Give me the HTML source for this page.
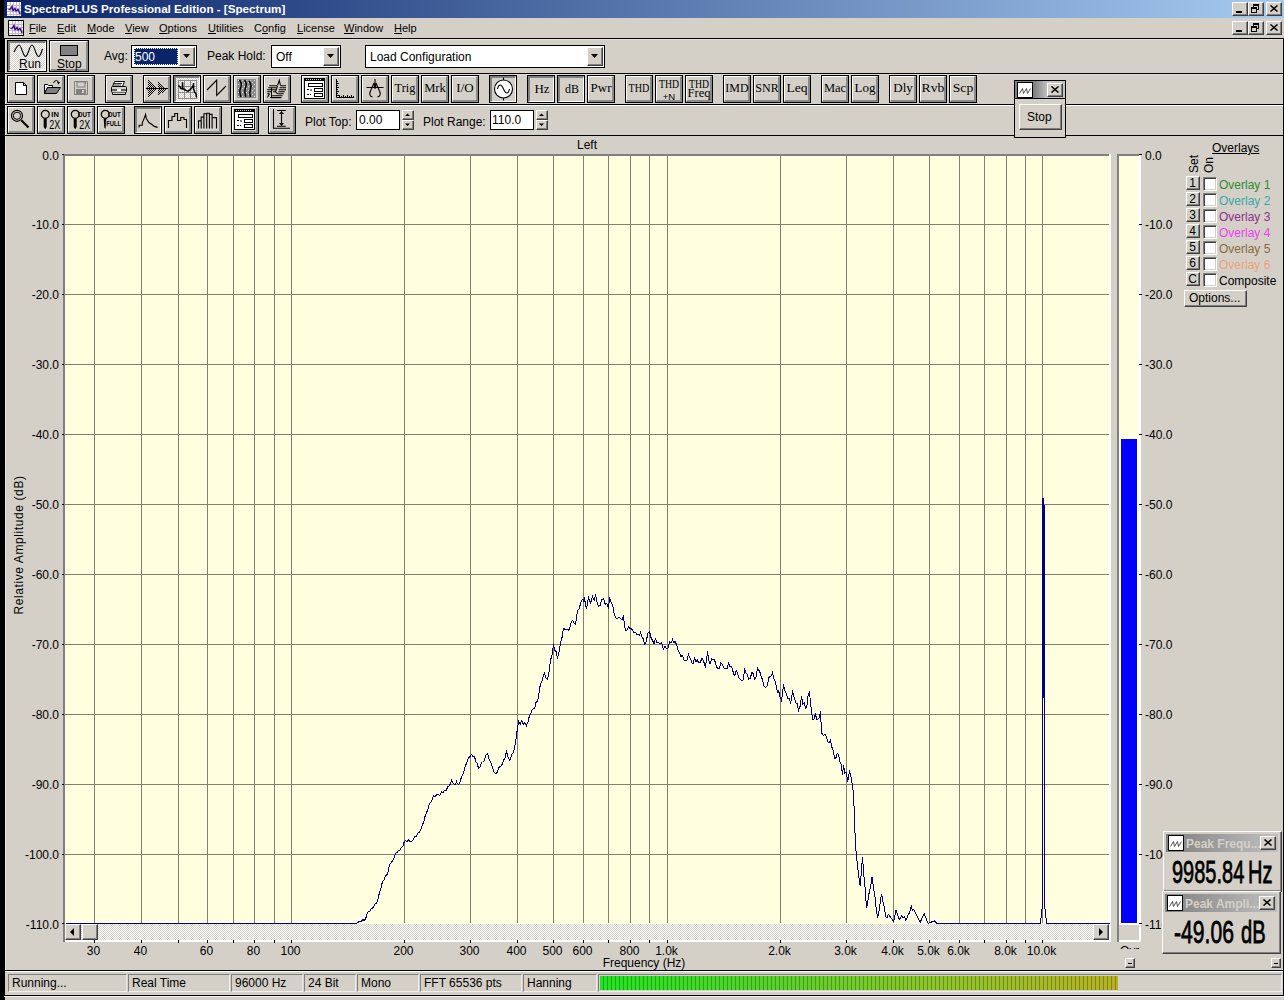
<!DOCTYPE html><html><head><meta charset="utf-8"><style>*{margin:0;padding:0;box-sizing:border-box}
html,body{width:1284px;height:1000px;overflow:hidden;background:#D4D0C8;font-family:"Liberation Sans",sans-serif;font-size:12px;color:#000;position:relative}
.a{position:absolute}
.t{position:absolute;white-space:nowrap;line-height:1}
.b{position:absolute;border:1px solid #000;background:#D4D0C8}
.b::before{content:'';position:absolute;left:0;top:0;right:0;bottom:0;border-top:1px solid #fff;border-left:1px solid #fff;border-right:2px solid #8A8A8A;border-bottom:2px solid #8A8A8A}
.p{background-color:#E8E6E2;background-image:repeating-conic-gradient(#D4D0C8 0 25%,#fff 0 50%);background-size:2px 2px}
.p::before{border-top:2px solid #808080;border-left:2px solid #808080;border-right:1px solid #fff;border-bottom:1px solid #fff}
.sv{position:absolute;left:0;top:0;overflow:visible}
.ser{font-family:"Liberation Serif",serif}
.u{text-decoration:underline}
.btn2{position:absolute;background:#D4D0C8;border-top:1px solid #fff;border-left:1px solid #fff;border-right:1px solid #404040;border-bottom:1px solid #404040;box-shadow:inset -1px -1px 0 #808080}
.sunk{position:absolute;background:#fff;border-top:1px solid #808080;border-left:1px solid #808080;border-right:1px solid #fff;border-bottom:1px solid #fff;box-shadow:inset 1px 1px 0 #404040,inset -1px -1px 0 #D4D0C8}
</style></head><body><div class="a" style="left:0px;top:0px;width:5px;height:1000px;background:#000;"></div><div class="a" style="left:4px;top:0px;width:1280px;height:18px;background:linear-gradient(to right,#0A246A,#A6CAF0);"></div><svg class="a" style="left:7px;top:2px" width="14" height="14" viewBox="0 0 14 14"><rect x="0" y="0" width="14" height="14" fill="#fff"/><rect x="3" y="0" width="1" height="14" fill="#C8B8C8"/><rect x="0" y="3" width="14" height="1" fill="#C8B8C8"/><rect x="6" y="0" width="1" height="14" fill="#C8B8C8"/><rect x="0" y="6" width="14" height="1" fill="#C8B8C8"/><rect x="9" y="0" width="1" height="14" fill="#C8B8C8"/><rect x="0" y="9" width="14" height="1" fill="#C8B8C8"/><rect x="12" y="0" width="1" height="14" fill="#C8B8C8"/><rect x="0" y="12" width="14" height="1" fill="#C8B8C8"/><g transform="translate(0 0)"><path d="M1.5 7.5 L3.5 7 L5 4.5 L6 8.5 L8 6.5 L9 9 L11 7.5 L12.5 10.5 L13 12" stroke="#C0A0F0" stroke-width="2.4" fill="none"/><path d="M1.5 7.5 L3.5 7 L5 4.5 L6 8.5 L8 6.5 L9 9 L11 7.5 L12.5 10.5 L13 12" stroke="#2A0A70" stroke-width="1.2" fill="none"/></g></svg><div class="t" style="left:24px;top:3px;font-size:11.65px;font-weight:bold;color:#fff">SpectraPLUS Professional Edition - [Spectrum]</div><div class="a" style="left:4px;top:18px;width:1280px;height:20px;background:#D4D0C8;"></div><div class="btn2" style="left:1232px;top:2px;width:16px;height:14px"></div><div class="a" style="left:1236px;top:11px;width:6px;height:2px;background:#000;"></div><div class="btn2" style="left:1248px;top:2px;width:16px;height:14px"></div><div class="a" style="left:1253px;top:4px;width:6px;height:6px;border:1px solid #000;border-top-width:2px"></div><div class="a" style="left:1251px;top:7px;width:6px;height:6px;border:1px solid #000;border-top-width:2px;background:#D4D0C8"></div><div class="btn2" style="left:1266px;top:2px;width:16px;height:14px"></div><svg class="a" style="left:1270px;top:5px" width="8" height="7"><path d="M0.5 0.5 L7.5 6.5 M7.5 0.5 L0.5 6.5" stroke="#000" stroke-width="1.5"/></svg><div class="btn2" style="left:1232px;top:21px;width:16px;height:14px"></div><div class="a" style="left:1236px;top:30px;width:6px;height:2px;background:#000;"></div><div class="btn2" style="left:1248px;top:21px;width:16px;height:14px"></div><div class="a" style="left:1253px;top:23px;width:6px;height:6px;border:1px solid #000;border-top-width:2px"></div><div class="a" style="left:1251px;top:26px;width:6px;height:6px;border:1px solid #000;border-top-width:2px;background:#D4D0C8"></div><div class="btn2" style="left:1266px;top:21px;width:16px;height:14px"></div><svg class="a" style="left:1270px;top:24px" width="8" height="7"><path d="M0.5 0.5 L7.5 6.5 M7.5 0.5 L0.5 6.5" stroke="#000" stroke-width="1.5"/></svg><svg class="a" style="left:8px;top:20px" width="16" height="16" viewBox="0 0 16 16"><rect x="1" y="1" width="14" height="14" fill="#fff"/><rect x="4" y="1" width="1" height="14" fill="#C8B8C8"/><rect x="1" y="4" width="14" height="1" fill="#C8B8C8"/><rect x="7" y="1" width="1" height="14" fill="#C8B8C8"/><rect x="1" y="7" width="14" height="1" fill="#C8B8C8"/><rect x="10" y="1" width="1" height="14" fill="#C8B8C8"/><rect x="1" y="10" width="14" height="1" fill="#C8B8C8"/><rect x="13" y="1" width="1" height="14" fill="#C8B8C8"/><rect x="1" y="13" width="14" height="1" fill="#C8B8C8"/><g transform="translate(1 1)"><path d="M1.5 7.5 L3.5 7 L5 4.5 L6 8.5 L8 6.5 L9 9 L11 7.5 L12.5 10.5 L13 12" stroke="#C0A0F0" stroke-width="2.4" fill="none"/><path d="M1.5 7.5 L3.5 7 L5 4.5 L6 8.5 L8 6.5 L9 9 L11 7.5 L12.5 10.5 L13 12" stroke="#2A0A70" stroke-width="1.2" fill="none"/></g><rect x="0.5" y="0.5" width="15" height="15" fill="none" stroke="#000"/></svg><div class="t" style="left:29px;top:23px;font-size:11px;"><u>F</u>ile</div><div class="t" style="left:57px;top:23px;font-size:11px;"><u>E</u>dit</div><div class="t" style="left:87px;top:23px;font-size:11px;"><u>M</u>ode</div><div class="t" style="left:125px;top:23px;font-size:11px;"><u>V</u>iew</div><div class="t" style="left:159px;top:23px;font-size:11px;"><u>O</u>ptions</div><div class="t" style="left:208px;top:23px;font-size:11px;"><u>U</u>tilities</div><div class="t" style="left:254px;top:23px;font-size:11px;">C<u>o</u>nfig</div><div class="t" style="left:297px;top:23px;font-size:11px;"><u>L</u>icense</div><div class="t" style="left:344px;top:23px;font-size:11px;"><u>W</u>indow</div><div class="t" style="left:394px;top:23px;font-size:11px;"><u>H</u>elp</div><div class="a" style="left:4px;top:38px;width:1280px;height:1px;background:#000;"></div><div class="a" style="left:1283px;top:38px;width:1px;height:958px;background:#000;"></div><div class="a" style="left:5px;top:39px;width:1278px;height:1px;background:#E2DFDA;"></div><div class="a" style="left:5px;top:39px;width:1px;height:931px;background:#E6E3DE;"></div><div class="b p" style="left:7px;top:40px;width:40px;height:32px;"></div><svg class="a" style="left:7px;top:40px" width="40" height="32" viewBox="0 0 40 32"><path d="M7 12 C9 8 10.5 5 12 5 C14.5 5 16 16.5 18.5 16.5 C21 16.5 22.5 5 25 5 C27.5 5 29 16.5 31.5 16.5 C33 16.5 34 14 35.5 9" fill="none" stroke="#000" stroke-width="1.1"/></svg><div class="t" style="left:19px;top:58px;font-size:12px;"><u>R</u>un</div><div class="b" style="left:49px;top:40px;width:40px;height:32px;"></div><div class="a" style="left:60px;top:45px;width:18px;height:11px;background:#808080;border:1px solid #000"></div><div class="t" style="left:57px;top:58px;font-size:12px;"><u>S</u>top</div><div class="t" style="left:104px;top:50px;font-size:12px;">Avg:</div><div class="a" style="left:131px;top:45px;width:66px;height:23px;background:#fff;border:1px solid #000"></div><div class="a" style="left:134px;top:48px;width:44px;height:17px;background:#0A246A;outline:1px dotted #fff;outline-offset:-1px"></div><div class="t" style="left:135px;top:51px;font-size:12px;color:#fff">500</div><div class="btn2" style="left:179px;top:47px;width:16px;height:19px"></div><svg class="a" style="left:183px;top:54px" width="8" height="5" viewBox="0 0 8 5"><path d="M0 0 L7 0 L3.5 4 Z" fill="#000"/></svg><div class="t" style="left:207px;top:50px;font-size:12px;">Peak Hold:</div><div class="a" style="left:271px;top:45px;width:70px;height:23px;background:#fff;border:1px solid #000"></div><div class="t" style="left:276px;top:51px;font-size:12px;">Off</div><div class="btn2" style="left:323px;top:47px;width:16px;height:19px"></div><svg class="a" style="left:327px;top:54px" width="8" height="5" viewBox="0 0 8 5"><path d="M0 0 L7 0 L3.5 4 Z" fill="#000"/></svg><div class="a" style="left:365px;top:45px;width:240px;height:23px;background:#fff;border:1px solid #000"></div><div class="t" style="left:370px;top:51px;font-size:12px;">Load Configuration</div><div class="btn2" style="left:587px;top:47px;width:16px;height:19px"></div><svg class="a" style="left:591px;top:54px" width="8" height="5" viewBox="0 0 8 5"><path d="M0 0 L7 0 L3.5 4 Z" fill="#000"/></svg><div class="a" style="left:5px;top:73px;width:1278px;height:1px;background:#000;"></div><div class="a" style="left:5px;top:74px;width:1278px;height:1px;background:#E2DFDA;"></div><div class="a" style="left:5px;top:104px;width:1278px;height:1px;background:#000;"></div><div class="a" style="left:5px;top:105px;width:1278px;height:1px;background:#fff;"></div><div class="a" style="left:5px;top:135px;width:1278px;height:1px;background:#000;"></div><div class="b" style="left:7px;top:75px;width:28px;height:28px;"></div><div class="b" style="left:37px;top:75px;width:28px;height:28px;"></div><div class="b" style="left:67px;top:75px;width:28px;height:28px;"></div><div class="b" style="left:105px;top:75px;width:28px;height:28px;"></div><div class="b" style="left:143px;top:75px;width:28px;height:28px;"></div><div class="b p" style="left:173px;top:75px;width:28px;height:28px;"></div><div class="b" style="left:203px;top:75px;width:28px;height:28px;"></div><div class="b" style="left:233px;top:75px;width:28px;height:28px;"></div><div class="b" style="left:263px;top:75px;width:28px;height:28px;"></div><div class="b" style="left:301px;top:75px;width:28px;height:28px;"></div><div class="b" style="left:331px;top:75px;width:28px;height:28px;"></div><div class="b" style="left:361px;top:75px;width:28px;height:28px;"></div><div class="b" style="left:391px;top:75px;width:28px;height:28px;"></div><div class="b" style="left:421px;top:75px;width:28px;height:28px;"></div><div class="b" style="left:451px;top:75px;width:28px;height:28px;"></div><div class="b" style="left:489px;top:75px;width:28px;height:28px;"></div><div class="a" style="left:490px;top:76px;width:26px;height:26px;border-top:2px solid #808080;border-left:2px solid #808080;border-right:1px solid #fff;border-bottom:1px solid #fff;background:#D4D0C8"></div><div class="b" style="left:527px;top:75px;width:28px;height:28px;"></div><div class="a" style="left:528px;top:76px;width:26px;height:26px;border-top:2px solid #808080;border-left:2px solid #808080;border-right:1px solid #fff;border-bottom:1px solid #fff;background:#D4D0C8"></div><div class="b" style="left:557px;top:75px;width:28px;height:28px;"></div><div class="a" style="left:558px;top:76px;width:26px;height:26px;border-top:2px solid #808080;border-left:2px solid #808080;border-right:1px solid #fff;border-bottom:1px solid #fff;background:#D4D0C8"></div><div class="b" style="left:587px;top:75px;width:28px;height:28px;"></div><div class="b" style="left:625px;top:75px;width:28px;height:28px;"></div><div class="b" style="left:655px;top:75px;width:28px;height:28px;"></div><div class="b" style="left:685px;top:75px;width:28px;height:28px;"></div><div class="b" style="left:723px;top:75px;width:28px;height:28px;"></div><div class="b" style="left:753px;top:75px;width:28px;height:28px;"></div><div class="b" style="left:783px;top:75px;width:28px;height:28px;"></div><div class="b" style="left:821px;top:75px;width:28px;height:28px;"></div><div class="b" style="left:851px;top:75px;width:28px;height:28px;"></div><div class="b" style="left:889px;top:75px;width:28px;height:28px;"></div><div class="b" style="left:919px;top:75px;width:28px;height:28px;"></div><div class="b" style="left:949px;top:75px;width:28px;height:28px;"></div><svg class="a" style="left:7px;top:75px" width="28" height="28" viewBox="0 0 28 28"><path d="M8.5 7.5 H16.5 L19.5 10.5 V19.5 H8.5 Z" fill="#fff" stroke="#000"/><path d="M16.5 7.5 V10.5 H19.5" fill="none" stroke="#000"/></svg><svg class="a" style="left:37px;top:75px" width="28" height="28" viewBox="0 0 28 28"><path d="M7.5 9.5 H10.5 L11.5 10.5 H15.5 V12.5 H10.5 L7.5 18.5 Z" fill="#fff" stroke="#000"/><path d="M7.5 18.5 L10.5 12.5 H23.5 L19.5 18.5 Z" fill="#808080" stroke="#000"/><path d="M16.5 8 Q17.5 5.5 19.5 5.5 Q21 5.5 21.5 7.5" fill="none" stroke="#000"/><path d="M20 7 H23 L21.5 9.5 Z" fill="#000"/></svg><svg class="a" style="left:67px;top:75px" width="28" height="28" viewBox="0 0 28 28"><path d="M7.5 6.5 H20.5 V19.5 H7.5 Z" fill="none" stroke="#808080"/><rect x="10" y="7" width="8" height="5" fill="none" stroke="#808080"/><rect x="9" y="14" width="10" height="5" fill="#808080"/><rect x="15" y="15" width="2" height="3" fill="#D4D0C8"/><path d="M18.5 7 V9" stroke="#808080"/></svg><svg class="a" style="left:105px;top:75px" width="28" height="28" viewBox="0 0 28 28"><path d="M9.5 6.5 H19.5 L17.5 11.5 H7.5 Z" fill="#fff" stroke="#000"/><path d="M9 8.5 H17 M8.5 10 H16" stroke="#000" stroke-width="0.8"/><path d="M6.5 12.5 Q6.5 11.5 7.5 11.5 H20.5 Q21.5 11.5 21.5 12.5 V16.5 Q21.5 17.5 20.5 17.5 H7.5 Q6.5 17.5 6.5 16.5 Z" fill="#D4D0C8" stroke="#000"/><rect x="7" y="14" width="14" height="2" fill="#606060"/><rect x="12" y="14" width="4" height="2" fill="#fff"/><path d="M7.5 17.5 V19.5 H20.5 V17.5" fill="#D4D0C8" stroke="#000"/></svg><svg class="a" style="left:143px;top:75px" width="28" height="28" viewBox="0 0 28 28"><rect x="5" y="5" width="1" height="1" fill="#000"/><rect x="6" y="6" width="1" height="1" fill="#000"/><rect x="5" y="7" width="1" height="1" fill="#000"/><rect x="7" y="7" width="1" height="1" fill="#000"/><rect x="15" y="7" width="1" height="1" fill="#000"/><rect x="6" y="8" width="1" height="1" fill="#000"/><rect x="8" y="8" width="1" height="1" fill="#000"/><rect x="16" y="8" width="1" height="1" fill="#000"/><rect x="5" y="9" width="1" height="1" fill="#000"/><rect x="7" y="9" width="1" height="1" fill="#000"/><rect x="9" y="9" width="1" height="1" fill="#000"/><rect x="15" y="9" width="1" height="1" fill="#000"/><rect x="17" y="9" width="1" height="1" fill="#000"/><rect x="6" y="10" width="1" height="1" fill="#000"/><rect x="8" y="10" width="1" height="1" fill="#000"/><rect x="10" y="10" width="1" height="1" fill="#000"/><rect x="16" y="10" width="1" height="1" fill="#000"/><rect x="18" y="10" width="1" height="1" fill="#000"/><rect x="5" y="11" width="1" height="1" fill="#000"/><rect x="7" y="11" width="1" height="1" fill="#000"/><rect x="9" y="11" width="1" height="1" fill="#000"/><rect x="11" y="11" width="1" height="1" fill="#000"/><rect x="15" y="11" width="1" height="1" fill="#000"/><rect x="17" y="11" width="1" height="1" fill="#000"/><rect x="19" y="11" width="1" height="1" fill="#000"/><rect x="6" y="12" width="1" height="1" fill="#000"/><rect x="8" y="12" width="1" height="1" fill="#000"/><rect x="10" y="12" width="1" height="1" fill="#000"/><rect x="12" y="12" width="1" height="1" fill="#000"/><rect x="16" y="12" width="1" height="1" fill="#000"/><rect x="18" y="12" width="1" height="1" fill="#000"/><rect x="20" y="12" width="1" height="1" fill="#000"/><rect x="5" y="13" width="1" height="1" fill="#000"/><rect x="7" y="13" width="1" height="1" fill="#000"/><rect x="9" y="13" width="1" height="1" fill="#000"/><rect x="11" y="13" width="1" height="1" fill="#000"/><rect x="13" y="13" width="1" height="1" fill="#000"/><rect x="15" y="13" width="1" height="1" fill="#000"/><rect x="17" y="13" width="1" height="1" fill="#000"/><rect x="19" y="13" width="1" height="1" fill="#000"/><rect x="21" y="13" width="1" height="1" fill="#000"/><rect x="6" y="14" width="1" height="1" fill="#000"/><rect x="8" y="14" width="1" height="1" fill="#000"/><rect x="10" y="14" width="1" height="1" fill="#000"/><rect x="12" y="14" width="1" height="1" fill="#000"/><rect x="16" y="14" width="1" height="1" fill="#000"/><rect x="18" y="14" width="1" height="1" fill="#000"/><rect x="20" y="14" width="1" height="1" fill="#000"/><rect x="22" y="14" width="1" height="1" fill="#000"/><rect x="5" y="15" width="1" height="1" fill="#000"/><rect x="7" y="15" width="1" height="1" fill="#000"/><rect x="9" y="15" width="1" height="1" fill="#000"/><rect x="11" y="15" width="1" height="1" fill="#000"/><rect x="15" y="15" width="1" height="1" fill="#000"/><rect x="17" y="15" width="1" height="1" fill="#000"/><rect x="19" y="15" width="1" height="1" fill="#000"/><rect x="21" y="15" width="1" height="1" fill="#000"/><rect x="6" y="16" width="1" height="1" fill="#000"/><rect x="8" y="16" width="1" height="1" fill="#000"/><rect x="10" y="16" width="1" height="1" fill="#000"/><rect x="16" y="16" width="1" height="1" fill="#000"/><rect x="18" y="16" width="1" height="1" fill="#000"/><rect x="20" y="16" width="1" height="1" fill="#000"/><rect x="5" y="17" width="1" height="1" fill="#000"/><rect x="7" y="17" width="1" height="1" fill="#000"/><rect x="9" y="17" width="1" height="1" fill="#000"/><rect x="15" y="17" width="1" height="1" fill="#000"/><rect x="17" y="17" width="1" height="1" fill="#000"/><rect x="19" y="17" width="1" height="1" fill="#000"/><rect x="6" y="18" width="1" height="1" fill="#000"/><rect x="8" y="18" width="1" height="1" fill="#000"/><rect x="16" y="18" width="1" height="1" fill="#000"/><rect x="5" y="19" width="1" height="1" fill="#000"/><rect x="7" y="19" width="1" height="1" fill="#000"/><rect x="15" y="19" width="1" height="1" fill="#000"/><rect x="6" y="20" width="1" height="1" fill="#000"/><rect x="5" y="21" width="1" height="1" fill="#000"/><path d="M3 13.5 H25" stroke="#000"/><path d="M3 13.5 L5 12 V15 Z" fill="#000"/></svg><svg class="a" style="left:173px;top:75px" width="28" height="28" viewBox="0 0 28 28"><rect x="5.5" y="5.5" width="18" height="18" fill="none" stroke="#8C8C8C"/><path d="M11.5 5.5 V23.5 M17.5 5.5 V23.5 M5.5 11.5 H23.5 M5.5 17.5 H23.5" stroke="#8C8C8C"/><path d="M5.3 10.6 L7 11.8 L8 13.5 L9.5 13.8 L9.5 7.3 L9.8 13.8 L11 14.3 L13 15.4 L15 16.2 L17 15 L19 12.5 L20.5 10 L20.5 8 L20.6 14 L21.5 17 L23 19 L23.5 22.5" fill="none" stroke="#000" stroke-width="1.5"/></svg><svg class="a" style="left:203px;top:75px" width="28" height="28" viewBox="0 0 28 28"><path d="M4 15 L13.7 5.2 V20.4 L23 11" fill="none" stroke="#000" stroke-width="1.1"/></svg><svg class="a" style="left:233px;top:75px" width="28" height="28" viewBox="0 0 28 28"><rect x="4" y="4" width="19" height="19" fill="#8A8A8A"/><rect x="5" y="5" width="1" height="1" fill="#E0E0E0"/><rect x="9" y="5" width="1" height="1" fill="#E0E0E0"/><rect x="13" y="5" width="1" height="1" fill="#E0E0E0"/><rect x="17" y="5" width="1" height="1" fill="#E0E0E0"/><rect x="21" y="5" width="1" height="1" fill="#E0E0E0"/><rect x="7" y="7" width="1" height="1" fill="#E0E0E0"/><rect x="11" y="7" width="1" height="1" fill="#E0E0E0"/><rect x="15" y="7" width="1" height="1" fill="#E0E0E0"/><rect x="19" y="7" width="1" height="1" fill="#E0E0E0"/><rect x="5" y="9" width="1" height="1" fill="#E0E0E0"/><rect x="9" y="9" width="1" height="1" fill="#E0E0E0"/><rect x="13" y="9" width="1" height="1" fill="#E0E0E0"/><rect x="17" y="9" width="1" height="1" fill="#E0E0E0"/><rect x="21" y="9" width="1" height="1" fill="#E0E0E0"/><rect x="7" y="11" width="1" height="1" fill="#E0E0E0"/><rect x="11" y="11" width="1" height="1" fill="#E0E0E0"/><rect x="15" y="11" width="1" height="1" fill="#E0E0E0"/><rect x="19" y="11" width="1" height="1" fill="#E0E0E0"/><rect x="5" y="13" width="1" height="1" fill="#E0E0E0"/><rect x="9" y="13" width="1" height="1" fill="#E0E0E0"/><rect x="13" y="13" width="1" height="1" fill="#E0E0E0"/><rect x="17" y="13" width="1" height="1" fill="#E0E0E0"/><rect x="21" y="13" width="1" height="1" fill="#E0E0E0"/><rect x="7" y="15" width="1" height="1" fill="#E0E0E0"/><rect x="11" y="15" width="1" height="1" fill="#E0E0E0"/><rect x="15" y="15" width="1" height="1" fill="#E0E0E0"/><rect x="19" y="15" width="1" height="1" fill="#E0E0E0"/><rect x="5" y="17" width="1" height="1" fill="#E0E0E0"/><rect x="9" y="17" width="1" height="1" fill="#E0E0E0"/><rect x="13" y="17" width="1" height="1" fill="#E0E0E0"/><rect x="17" y="17" width="1" height="1" fill="#E0E0E0"/><rect x="21" y="17" width="1" height="1" fill="#E0E0E0"/><rect x="7" y="19" width="1" height="1" fill="#E0E0E0"/><rect x="11" y="19" width="1" height="1" fill="#E0E0E0"/><rect x="15" y="19" width="1" height="1" fill="#E0E0E0"/><rect x="19" y="19" width="1" height="1" fill="#E0E0E0"/><rect x="5" y="21" width="1" height="1" fill="#E0E0E0"/><rect x="9" y="21" width="1" height="1" fill="#E0E0E0"/><rect x="13" y="21" width="1" height="1" fill="#E0E0E0"/><rect x="17" y="21" width="1" height="1" fill="#E0E0E0"/><rect x="21" y="21" width="1" height="1" fill="#E0E0E0"/><path d="M6.5 5 Q9.5 9 7.5 13 Q6 17 8 22 M11.5 5 Q14.5 9 12.5 13 Q11 17 13 22 M16 6 Q19 10 17.5 14 Q16 18 17.5 22" fill="none" stroke="#000" stroke-width="1.5"/></svg><svg class="a" style="left:263px;top:75px" width="28" height="28" viewBox="0 0 28 28"><path d="M6.2 10.8 H14 M17.5 10.8 H23 M5.3 12.8 H13.3 M16.5 12.8 H23 M4.2 14.8 H13.6 M15.7 14.8 H23 M4.2 16.8 H8.4 M10 16.8 H12.5 M15.4 16.8 H21.8 M4.2 18.8 H6.7 M14.6 18.8 H20.7 M9.2 20.8 H19.6 M7.3 22.6 H18.5 M14.6 10.5 L16.3 5.3 L17.5 10.5 M14.5 10.8 L13.3 14.8 L12.5 16.8 L14.6 18.8 M8.5 13 V22.5 M6.5 18.5 L4.5 22.5" fill="none" stroke="#000" stroke-width="1.05"/></svg><svg class="a" style="left:301px;top:75px" width="28" height="28" viewBox="0 0 28 28"><rect x="3.5" y="3.5" width="20" height="20" fill="#fff" stroke="#000"/><rect x="3" y="3" width="21" height="3" fill="#000"/><path d="M5 4.5 H21" stroke="#fff" stroke-dasharray="1 1" stroke-width="0.8"/><rect x="7.5" y="8.5" width="14" height="3" fill="none" stroke="#000"/><rect x="13.5" y="13.5" width="8" height="3" fill="none" stroke="#000"/><rect x="13.5" y="18.5" width="8" height="3" fill="none" stroke="#000"/><path d="M6 14.5 H8 M9 15 H11 M6 19.5 H8 M9 19.5 H10" stroke="#000"/></svg><svg class="a" style="left:331px;top:75px" width="28" height="28" viewBox="0 0 28 28"><path d="M5.5 4 V22.5 H23" fill="none" stroke="#000"/><path d="M5.5 6.5 H7" stroke="#000"/><path d="M5.5 8.5 H8" stroke="#000"/><path d="M5.5 10.5 H7" stroke="#000"/><path d="M5.5 12.5 H8" stroke="#000"/><path d="M5.5 14.5 H7" stroke="#000"/><path d="M5.5 16.5 H8" stroke="#000"/><path d="M5.5 18.5 H7" stroke="#000"/><path d="M5.5 20.5 H8" stroke="#000"/><path d="M8.5 22.5 V20" stroke="#000"/><path d="M10.5 22.5 V21" stroke="#000"/><path d="M12.5 22.5 V20" stroke="#000"/><path d="M14.5 22.5 V21" stroke="#000"/><path d="M16.5 22.5 V20" stroke="#000"/><path d="M18.5 22.5 V21" stroke="#000"/><path d="M20.5 22.5 V20" stroke="#000"/><path d="M22.5 22.5 V21" stroke="#000"/></svg><svg class="a" style="left:361px;top:75px" width="28" height="28" viewBox="0 0 28 28"><path d="M14 4 V14 M13 8 L9.5 16 Q8 19 9.5 21 L11.5 22 M15 8 L18.5 16 Q20 19 18.5 21 L16.5 22 M5.5 12.5 H22.5" fill="none" stroke="#000" stroke-width="1.1"/><rect x="12.8" y="9" width="2.4" height="4" fill="#000"/></svg><div class="t ser" style="left:391px;top:81px;width:28px;text-align:center;font-size:13px;transform:scaleX(0.95)">Trig</div><div class="t ser" style="left:421px;top:81px;width:28px;text-align:center;font-size:13px;transform:scaleX(0.97)">Mrk</div><div class="t ser" style="left:451px;top:81px;width:28px;text-align:center;font-size:13px;transform:scaleX(1)">I/O</div><div class="t ser" style="left:528px;top:82px;width:28px;text-align:center;font-size:13px;transform:scaleX(1)">Hz</div><div class="t ser" style="left:558px;top:82px;width:28px;text-align:center;font-size:13px;transform:scaleX(0.92)">dB</div><div class="t ser" style="left:587px;top:81px;width:28px;text-align:center;font-size:13px;transform:scaleX(1)">Pwr</div><div class="t ser" style="left:625px;top:81px;width:28px;text-align:center;font-size:13px;transform:scaleX(0.78)">THD</div><div class="t ser" style="left:723px;top:81px;width:28px;text-align:center;font-size:13px;transform:scaleX(0.92)">IMD</div><div class="t ser" style="left:753px;top:81px;width:28px;text-align:center;font-size:13px;transform:scaleX(0.92)">SNR</div><div class="t ser" style="left:783px;top:81px;width:28px;text-align:center;font-size:13px;transform:scaleX(1.05)">Leq</div><div class="t ser" style="left:821px;top:81px;width:28px;text-align:center;font-size:13px;transform:scaleX(0.96)">Mac</div><div class="t ser" style="left:851px;top:81px;width:28px;text-align:center;font-size:13px;transform:scaleX(1)">Log</div><div class="t ser" style="left:889px;top:81px;width:28px;text-align:center;font-size:13px;transform:scaleX(1)">Dly</div><div class="t ser" style="left:919px;top:81px;width:28px;text-align:center;font-size:13px;transform:scaleX(1.05)">Rvb</div><div class="t ser" style="left:949px;top:81px;width:28px;text-align:center;font-size:13px;transform:scaleX(1.05)">Scp</div><div class="t ser" style="left:655px;top:77.5px;width:28px;text-align:center;font-size:12.5px;transform:scaleX(0.78)">THD</div><div class="t" style="left:655px;top:91.5px;width:28px;text-align:center;font-size:9.5px">+N</div><div class="t ser" style="left:685px;top:77.5px;width:28px;text-align:center;font-size:12.5px;transform:scaleX(0.78)">THD</div><div class="t ser" style="left:685px;top:87px;width:28px;text-align:center;font-size:12.5px;transform:scaleX(1.0)">Freq</div><svg class="a" style="left:489px;top:75px" width="28" height="28" viewBox="0 0 28 28"><circle cx="14.5" cy="14" r="9" fill="#fff" stroke="#000" stroke-width="1.1"/><path d="M14.5 2.5 V5 M14.5 23 V25.5" stroke="#000" stroke-width="1.1"/><path d="M8.5 14 C9.5 9 12 9 13.5 12 L15.5 16 C17 19 19.5 19 20.5 14" fill="none" stroke="#000" stroke-width="1.1"/></svg><div class="b" style="left:7px;top:106px;width:28px;height:28px;"></div><div class="b" style="left:37px;top:106px;width:28px;height:28px;"></div><div class="b" style="left:67px;top:106px;width:28px;height:28px;"></div><div class="b" style="left:97px;top:106px;width:28px;height:28px;"></div><div class="b" style="left:134px;top:106px;width:28px;height:28px;"></div><div class="a" style="left:135px;top:107px;width:26px;height:26px;border-top:2px solid #808080;border-left:2px solid #808080;border-right:1px solid #fff;border-bottom:1px solid #fff;background:#D4D0C8"></div><div class="b" style="left:164px;top:106px;width:28px;height:28px;"></div><div class="b" style="left:194px;top:106px;width:28px;height:28px;"></div><div class="b" style="left:231px;top:106px;width:28px;height:28px;"></div><div class="b" style="left:268px;top:106px;width:28px;height:28px;"></div><svg class="a" style="left:7px;top:106px" width="28" height="28" viewBox="0 0 28 28"><circle cx="10" cy="9.8" r="5.5" fill="none" stroke="#000" stroke-width="1.2"/><circle cx="10" cy="9.8" r="3.6" fill="none" stroke="#000" stroke-width="1"/><path d="M14.3 14.3 L21.5 21.5" stroke="#000" stroke-width="2.2"/></svg><svg class="a" style="left:37px;top:106px" width="28" height="28" viewBox="0 0 28 28"><circle cx="8.3" cy="8.3" r="4" fill="#D4D0C8" stroke="#000" stroke-width="1.2"/><path d="M6.7 12.5 H9.7 V21 L8.2 23.2 L6.7 21 Z" fill="#000"/><text x="0" y="0" font-family="Liberation Sans" font-size="7.5" font-weight="bold" transform="translate(14.3 10.8) scale(1.0 1)">IN</text><text x="0" y="0" font-family="Liberation Sans" font-size="12.5" font-weight="normal" transform="translate(12.3 22.9) scale(0.72 1)">2X</text></svg><svg class="a" style="left:67px;top:106px" width="28" height="28" viewBox="0 0 28 28"><circle cx="8.3" cy="8.3" r="4" fill="#D4D0C8" stroke="#000" stroke-width="1.2"/><path d="M6.7 12.5 H9.7 V21 L8.2 23.2 L6.7 21 Z" fill="#000"/><text x="0" y="0" font-family="Liberation Sans" font-size="7.5" font-weight="bold" transform="translate(10.8 10.8) scale(0.82 1)">OUT</text><text x="0" y="0" font-family="Liberation Sans" font-size="12.5" font-weight="normal" transform="translate(12.3 22.9) scale(0.72 1)">2X</text></svg><svg class="a" style="left:97px;top:106px" width="28" height="28" viewBox="0 0 28 28"><circle cx="8.3" cy="8.3" r="4" fill="#D4D0C8" stroke="#000" stroke-width="1.2"/><path d="M6.7 12.5 H9.7 L8.8 15 V21 L8.2 23 L7.2 21 Z" fill="#000"/><text x="0" y="0" font-family="Liberation Sans" font-size="7.5" font-weight="bold" transform="translate(10.8 10.8) scale(0.82 1)">OUT</text><text x="0" y="0" font-family="Liberation Sans" font-size="7.5" font-weight="bold" transform="translate(9.2 19.9) scale(0.78 1)">FULL</text></svg><svg class="a" style="left:134px;top:106px" width="28" height="28" viewBox="0 0 28 28"><path d="M5.1 21.4 V19.3 H8.3 V16.5 L9.4 14.4 L11.6 8.4 L12.2 12.2 L14.9 16.5 L17.6 18.2 L20.3 20.4 L23.6 21.4" fill="none" stroke="#000" stroke-width="1.1"/></svg><svg class="a" style="left:164px;top:106px" width="28" height="28" viewBox="0 0 28 28"><path d="M4.5 22 V14.5 H8 V10.5 H10.7 V7.5 H13.5 V14.5 H16.7 V11.5 H20 V13.5 H22.5 V22" fill="none" stroke="#000" stroke-width="1.1"/></svg><svg class="a" style="left:194px;top:106px" width="28" height="28" viewBox="0 0 28 28"><path d="M4.5 22.5 V14.9 H7.2 V11.1 H9.9 V7.8 H12.7 V7.3 H15.4 V8.4 H18.1 V11.6 H22.5 V22.5 M7.2 22.5 V14.9 M9.9 22.5 V11.1 M12.7 22.5 V7.8 M15.4 22.5 V8.4 M18.1 22.5 V11.6" fill="none" stroke="#000" stroke-width="1.1"/></svg><svg class="a" style="left:231px;top:106px" width="28" height="28" viewBox="0 0 28 28"><rect x="3.5" y="3.5" width="20" height="20" fill="#fff" stroke="#000"/><rect x="3" y="3" width="21" height="3" fill="#000"/><path d="M5 4.5 H21" stroke="#fff" stroke-dasharray="1 1" stroke-width="0.8"/><rect x="7.5" y="8.5" width="14" height="3" fill="none" stroke="#000"/><rect x="13.5" y="13.5" width="8" height="3" fill="none" stroke="#000"/><rect x="13.5" y="18.5" width="8" height="3" fill="none" stroke="#000"/><path d="M6 14.5 H8 M9 15 H11 M6 19.5 H8 M9 19.5 H10" stroke="#000"/></svg><svg class="a" style="left:268px;top:106px" width="28" height="28" viewBox="0 0 28 28"><path d="M5.5 3 V22.2 H22 M9 4.5 H17.8 M9 20.3 H17.8 M13.5 6 V19" fill="none" stroke="#000" stroke-width="1.1"/><path d="M11 8 L13.5 5 L16 8 Z M11 17 L13.5 20 L16 17 Z" fill="#000"/></svg><div class="t" style="left:305px;top:116px;font-size:12px;">Plot Top:</div><div class="a" style="left:356px;top:110px;width:44px;height:20px;background:#fff;border:1px solid #000"></div><div class="t" style="left:359px;top:114px;font-size:12px;">0.00</div><div class="btn2" style="left:402px;top:110px;width:12px;height:10px"></div><div class="btn2" style="left:402px;top:120px;width:12px;height:10px"></div><svg class="a" style="left:405px;top:113px" width="6" height="4" viewBox="0 0 6 4"><path d="M0 3 L5 3 L2.5 0.5 Z" fill="#000"/></svg><svg class="a" style="left:405px;top:123px" width="6" height="4" viewBox="0 0 6 4"><path d="M0 0.5 L5 0.5 L2.5 3 Z" fill="#000"/></svg><div class="t" style="left:423px;top:116px;font-size:12px;">Plot Range:</div><div class="a" style="left:490px;top:110px;width:44px;height:20px;background:#fff;border:1px solid #000"></div><div class="t" style="left:492px;top:114px;font-size:12px;">110.0</div><div class="btn2" style="left:536px;top:110px;width:12px;height:10px"></div><div class="btn2" style="left:536px;top:120px;width:12px;height:10px"></div><svg class="a" style="left:539px;top:113px" width="6" height="4" viewBox="0 0 6 4"><path d="M0 3 L5 3 L2.5 0.5 Z" fill="#000"/></svg><svg class="a" style="left:539px;top:123px" width="6" height="4" viewBox="0 0 6 4"><path d="M0 0.5 L5 0.5 L2.5 3 Z" fill="#000"/></svg><div class="a" style="left:1014px;top:80px;width:52px;height:58px;background:#D4D0C8;border:1px solid #000"></div><div class="a" style="left:1015px;top:81px;width:50px;height:18px;background:linear-gradient(to right,#808080 38%,#C4C4C4 66%);"></div><div class="a" style="left:1015px;top:98px;width:50px;height:1px;background:#000;"></div><div class="a" style="left:1017px;top:82px;width:16px;height:16px;background:#fff;border:1px solid #000"></div><svg class="a" style="left:1019px;top:85px" width="12" height="10" viewBox="0 0 12 10"><path d="M0.5 8.5 L3.5 3.5 L4.5 8.5 L7.5 3.5 L8.5 8.5 L11.5 3.5" fill="none" stroke="#404040" stroke-width="0.9"/></svg><div class="btn2" style="left:1047px;top:83px;width:16px;height:14px"></div><svg class="a" style="left:1051px;top:86px" width="8" height="7" viewBox="0 0 8 7"><path d="M0.5 0.5 L7.5 6.5 M7.5 0.5 L0.5 6.5" stroke="#000" stroke-width="1.5"/></svg><div class="btn2" style="left:1019px;top:104px;width:43px;height:26px"></div><div class="t" style="left:1027px;top:111px;font-size:12px;">Stop</div><svg class="sv" width="1284" height="1000"><rect x="63" y="154" width="1048" height="788" fill="#fff"/><rect x="63" y="154" width="1046" height="2" fill="#808080"/><rect x="63" y="154" width="2" height="788" fill="#808080"/><rect x="65" y="156" width="1044" height="768" fill="#FFFFE0"/><rect x="94" y="156" width="1" height="767" fill="#80806C"/><rect x="94" y="940" width="1" height="3" fill="#000"/><rect x="141" y="156" width="1" height="767" fill="#80806C"/><rect x="141" y="940" width="1" height="3" fill="#000"/><rect x="178" y="156" width="1" height="767" fill="#80806C"/><rect x="178" y="940" width="1" height="3" fill="#000"/><rect x="207" y="156" width="1" height="767" fill="#80806C"/><rect x="207" y="940" width="1" height="3" fill="#000"/><rect x="233" y="156" width="1" height="767" fill="#80806C"/><rect x="233" y="940" width="1" height="3" fill="#000"/><rect x="254" y="156" width="1" height="767" fill="#80806C"/><rect x="254" y="940" width="1" height="3" fill="#000"/><rect x="274" y="156" width="1" height="767" fill="#80806C"/><rect x="274" y="940" width="1" height="3" fill="#000"/><rect x="291" y="156" width="1" height="767" fill="#80806C"/><rect x="291" y="940" width="1" height="3" fill="#000"/><rect x="404" y="156" width="1" height="767" fill="#80806C"/><rect x="404" y="940" width="1" height="3" fill="#000"/><rect x="470" y="156" width="1" height="767" fill="#80806C"/><rect x="470" y="940" width="1" height="3" fill="#000"/><rect x="517" y="156" width="1" height="767" fill="#80806C"/><rect x="517" y="940" width="1" height="3" fill="#000"/><rect x="553" y="156" width="1" height="767" fill="#80806C"/><rect x="553" y="940" width="1" height="3" fill="#000"/><rect x="583" y="156" width="1" height="767" fill="#80806C"/><rect x="583" y="940" width="1" height="3" fill="#000"/><rect x="608" y="156" width="1" height="767" fill="#80806C"/><rect x="608" y="940" width="1" height="3" fill="#000"/><rect x="630" y="156" width="1" height="767" fill="#80806C"/><rect x="630" y="940" width="1" height="3" fill="#000"/><rect x="649" y="156" width="1" height="767" fill="#80806C"/><rect x="649" y="940" width="1" height="3" fill="#000"/><rect x="667" y="156" width="1" height="767" fill="#80806C"/><rect x="667" y="940" width="1" height="3" fill="#000"/><rect x="780" y="156" width="1" height="767" fill="#80806C"/><rect x="780" y="940" width="1" height="3" fill="#000"/><rect x="846" y="156" width="1" height="767" fill="#80806C"/><rect x="846" y="940" width="1" height="3" fill="#000"/><rect x="893" y="156" width="1" height="767" fill="#80806C"/><rect x="893" y="940" width="1" height="3" fill="#000"/><rect x="929" y="156" width="1" height="767" fill="#80806C"/><rect x="929" y="940" width="1" height="3" fill="#000"/><rect x="959" y="156" width="1" height="767" fill="#80806C"/><rect x="959" y="940" width="1" height="3" fill="#000"/><rect x="984" y="156" width="1" height="767" fill="#80806C"/><rect x="984" y="940" width="1" height="3" fill="#000"/><rect x="1006" y="156" width="1" height="767" fill="#80806C"/><rect x="1006" y="940" width="1" height="3" fill="#000"/><rect x="1025" y="156" width="1" height="767" fill="#80806C"/><rect x="1025" y="940" width="1" height="3" fill="#000"/><rect x="1042" y="156" width="1" height="767" fill="#80806C"/><rect x="1042" y="940" width="1" height="3" fill="#000"/><rect x="65" y="224" width="1044" height="1" fill="#80806C"/><rect x="65" y="294" width="1044" height="1" fill="#80806C"/><rect x="65" y="364" width="1044" height="1" fill="#80806C"/><rect x="65" y="434" width="1044" height="1" fill="#80806C"/><rect x="65" y="504" width="1044" height="1" fill="#80806C"/><rect x="65" y="574" width="1044" height="1" fill="#80806C"/><rect x="65" y="644" width="1044" height="1" fill="#80806C"/><rect x="65" y="714" width="1044" height="1" fill="#80806C"/><rect x="65" y="784" width="1044" height="1" fill="#80806C"/><rect x="65" y="854" width="1044" height="1" fill="#80806C"/><rect x="62" y="154" width="2" height="1" fill="#000"/><rect x="62" y="224" width="2" height="1" fill="#000"/><rect x="62" y="294" width="2" height="1" fill="#000"/><rect x="62" y="364" width="2" height="1" fill="#000"/><rect x="62" y="434" width="2" height="1" fill="#000"/><rect x="62" y="504" width="2" height="1" fill="#000"/><rect x="62" y="574" width="2" height="1" fill="#000"/><rect x="62" y="644" width="2" height="1" fill="#000"/><rect x="62" y="714" width="2" height="1" fill="#000"/><rect x="62" y="784" width="2" height="1" fill="#000"/><rect x="62" y="854" width="2" height="1" fill="#000"/><rect x="62" y="923" width="2" height="1" fill="#000"/><defs><pattern id="dith" x="0" y="0" width="2" height="2" patternUnits="userSpaceOnUse"><rect width="2" height="2" fill="#fff"/><rect width="1" height="1" fill="#D4D0C8"/><rect x="1" y="1" width="1" height="1" fill="#D4D0C8"/></pattern></defs><rect x="65" y="924" width="1044" height="16" fill="url(#dith)"/><polyline points="65.5,923.5 356.5,923.5 359.5,921.1 361.2,921.5 362.8,919.7 364.5,920.5 365.8,918.2 367.2,913.5 368.5,911.5 369.8,911.4 371.2,908.9 372.5,908.1 373.8,906.9 375.2,903.7 376.5,903.5 378.0,898.6 379.5,892.5 381.0,887.6 382.5,881.5 384.0,880.0 385.5,875.5 386.5,875.4 387.5,873.5 388.5,870.3 389.5,864.5 391.0,863.4 392.5,860.5 394.0,858.1 395.5,853.5 397.0,852.5 398.5,850.5 400.0,850.1 401.5,847.5 402.8,846.5 404.2,841.9 405.5,840.5 407.0,841.9 408.5,839.9 410.0,841.6 411.5,841.5 413.0,840.2 414.5,836.5 416.2,836.2 417.8,833.2 419.5,832.5 421.0,828.8 422.5,824.5 423.8,821.8 425.2,815.6 426.5,812.5 427.8,810.3 429.2,804.5 430.5,802.5 432.0,800.2 433.5,795.5 435.2,796.7 436.8,794.3 438.5,794.9 440.0,795.1 441.5,791.9 443.0,793.0 444.5,790.5 446.2,790.2 447.8,786.7 449.5,785.5 450.5,783.5 451.5,780.5 453.0,783.1 454.5,784.5 455.5,784.5 456.5,781.5 457.5,783.8 458.5,784.5 459.8,782.6 461.2,777.8 462.5,775.5 464.0,771.4 465.5,765.5 467.0,762.3 468.5,757.5 470.0,756.7 471.5,754.5 473.0,756.5 474.5,756.5 475.8,761.5 477.2,763.1 478.5,768.5 479.8,767.6 481.2,763.1 482.5,762.5 484.2,760.8 485.8,755.0 487.5,753.5 489.2,759.3 490.8,762.3 492.5,767.5 494.0,771.8 495.5,773.5 497.2,772.6 498.8,767.4 500.5,766.5 502.0,764.5 503.5,760.5 505.0,757.8 506.5,751.5 508.0,756.7 509.5,760.5 510.5,759.5 511.5,754.5 513.0,753.0 514.5,748.5 515.8,740.4 517.2,730.1 518.5,721.5 520.1,724.4 521.7,720.7 523.3,724.4 524.9,722.7 526.5,725.5 528.0,721.7 529.5,715.5 530.8,713.8 532.2,709.9 533.5,708.5 534.8,708.1 536.2,701.7 537.5,701.5 539.0,692.9 540.5,683.5 541.8,681.8 543.2,676.4 544.5,673.5 546.0,678.3 547.5,679.5 549.0,671.7 550.5,659.9 552.0,655.6 553.5,644.5 554.8,650.5 556.2,651.4 557.5,658.5 559.0,652.0 560.5,643.0 562.0,637.6 563.5,628.5 565.2,629.5 566.8,629.1 568.5,630.5 569.8,628.3 571.2,622.3 572.5,620.5 574.0,623.1 575.5,624.5 576.5,617.9 577.5,610.5 579.2,609.0 580.8,602.2 582.5,599.5 583.5,600.8 584.5,597.5 585.5,605.2 586.5,608.5 587.5,603.6 588.5,596.5 589.5,600.8 590.5,602.5 591.5,600.4 592.5,595.5 593.5,599.7 594.5,600.5 595.5,594.5 597.0,602.1 598.5,606.5 600.2,605.3 601.8,599.6 603.5,598.5 605.2,604.1 606.8,603.8 608.5,608.5 609.5,597.5 611.0,602.2 612.5,604.5 614.0,612.8 615.5,617.5 617.2,618.6 618.8,617.2 620.5,618.5 622.0,619.9 623.5,616.5 624.5,624.9 625.5,630.5 627.0,630.0 628.5,626.5 629.8,628.2 631.2,628.0 632.5,630.5 634.0,633.0 635.5,632.2 637.0,635.1 638.5,634.5 639.5,635.1 640.5,632.5 641.8,636.9 643.2,638.9 644.5,644.5 646.2,641.9 647.8,633.4 649.5,631.5 651.0,637.4 652.5,640.5 654.0,643.5 655.5,638.9 657.0,642.4 658.5,642.5 660.1,644.2 661.7,642.5 663.3,649.4 664.9,646.2 666.5,648.5 668.0,648.0 669.5,641.9 671.0,643.0 672.5,639.5 673.8,642.6 675.2,641.6 676.5,644.5 678.0,649.9 679.5,652.5 681.0,656.6 682.5,655.3 684.0,660.0 685.5,660.5 687.0,660.2 688.5,654.5 689.5,656.9 690.5,658.5 692.0,663.1 693.5,663.5 694.5,657.5 695.8,661.7 697.2,659.6 698.5,662.5 700.2,662.8 701.8,658.4 703.5,660.5 704.5,664.5 705.5,666.5 706.5,659.9 707.5,651.5 708.5,659.1 709.5,663.5 710.5,663.5 711.5,658.5 713.0,659.6 714.5,659.5 716.0,665.3 717.5,668.5 719.2,668.5 720.8,662.9 722.5,664.5 724.0,668.2 725.5,668.5 727.0,669.0 728.5,663.5 729.8,666.3 731.2,666.2 732.5,669.5 733.5,673.5 734.8,675.8 736.2,670.5 737.5,673.5 739.0,678.2 740.5,679.5 742.0,680.5 743.5,679.5 744.5,668.5 745.8,672.8 747.2,673.9 748.5,679.5 750.2,678.4 751.8,672.7 753.5,673.5 754.5,679.5 756.0,676.9 757.5,668.5 758.5,670.4 759.5,670.5 761.0,676.2 762.5,679.5 764.0,686.3 765.5,687.5 767.2,686.1 768.8,677.4 770.5,676.5 771.5,675.9 772.5,672.5 773.8,678.2 775.2,681.3 776.5,687.5 777.5,691.8 778.5,690.5 780.0,696.6 781.5,700.5 782.5,693.9 783.5,684.5 785.0,691.1 786.5,694.5 787.8,698.8 789.2,698.3 790.5,702.5 791.5,699.7 792.5,690.5 793.5,695.3 794.5,698.5 795.8,702.8 797.2,703.3 798.5,710.5 800.0,706.5 801.5,696.5 802.8,703.9 804.2,702.9 805.5,708.5 806.8,706.4 808.2,694.7 809.5,692.5 811.0,707.0 812.5,719.5 814.0,719.1 815.5,713.5 816.5,719.4 817.5,719.5 819.0,717.9 820.5,711.5 821.5,732.5 823.2,735.7 824.8,734.0 826.5,736.5 827.5,740.9 828.5,742.5 829.5,742.5 830.5,740.5 831.8,747.0 833.2,750.4 834.5,758.5 835.8,758.4 837.2,753.0 838.5,754.5 839.8,761.6 841.2,764.7 842.5,774.5 843.5,765.5 844.8,773.0 846.2,772.3 847.5,780.5 848.5,778.6 849.5,770.5 851.3,778.5 852.9,788.1 854.5,813.5 855.3,844.1 856.9,860.1 858.5,875.0 860.1,885.5 861.3,872.7 862.5,856.9 863.8,874.3 865.2,889.2 866.5,908.1 867.9,901.0 869.3,891.6 870.7,886.4 872.1,876.9 873.5,888.5 874.9,896.1 876.3,909.8 877.7,917.7 879.0,911.3 880.4,900.7 881.7,893.7 883.0,902.3 884.4,907.1 885.7,916.9 887.0,917.9 888.4,914.4 889.7,916.1 893.7,921.7 896.1,909.7 897.7,915.5 899.3,919.3 900.5,918.0 901.7,915.3 903.0,918.3 904.4,916.5 905.7,920.1 906.9,918.0 908.1,914.5 909.7,912.5 911.3,906.5 912.5,910.3 913.7,909.7 920.1,922.5 924.1,913.7 928.1,923.3 934.5,920.9 936.9,923.3 940.9,923.5 1040.5,923.5 1041.5,912.5 1042.1,908.5 1042.5,698.5 1043.0,498.5 1044.0,498.5 1044.5,698.5 1044.9,908.5 1045.5,912.5 1046.5,923.5 1109.5,923.5" fill="none" stroke="#000080" stroke-width="1" stroke-linejoin="miter" shape-rendering="crispEdges"/><rect x="1042" y="498" width="2" height="200" fill="#000080"/><rect x="1117" y="154" width="24" height="788" fill="#fff"/><rect x="1117" y="154" width="22" height="2" fill="#808080"/><rect x="1117" y="154" width="2" height="788" fill="#808080"/><rect x="1119" y="156" width="19" height="769" fill="#FFFFE0"/><rect x="1119" y="437" width="19" height="488" fill="#fff"/><rect x="1121" y="439" width="16" height="484" fill="#0000FF"/><rect x="1119" y="925" width="20" height="15" fill="#D4D0C8"/><rect x="1139" y="154" width="3" height="1" fill="#000"/><rect x="1139" y="224" width="3" height="1" fill="#000"/><rect x="1139" y="294" width="3" height="1" fill="#000"/><rect x="1139" y="364" width="3" height="1" fill="#000"/><rect x="1139" y="434" width="3" height="1" fill="#000"/><rect x="1139" y="504" width="3" height="1" fill="#000"/><rect x="1139" y="574" width="3" height="1" fill="#000"/><rect x="1139" y="644" width="3" height="1" fill="#000"/><rect x="1139" y="714" width="3" height="1" fill="#000"/><rect x="1139" y="784" width="3" height="1" fill="#000"/><rect x="1139" y="854" width="3" height="1" fill="#000"/><rect x="1139" y="923" width="3" height="1" fill="#000"/></svg><div class="btn2" style="left:65px;top:924px;width:16px;height:16px"></div><svg class="a" style="left:70px;top:928px" width="5" height="8" viewBox="0 0 5 8"><path d="M4 0 L0 4 L4 8 Z" fill="#000"/></svg><div class="btn2" style="left:82px;top:924px;width:16px;height:16px"></div><div class="btn2" style="left:1093px;top:924px;width:16px;height:16px"></div><svg class="a" style="left:1099px;top:928px" width="5" height="8" viewBox="0 0 5 8"><path d="M0 0 L4 4 L0 8 Z" fill="#000"/></svg><div class="t" style="left:0px;top:150px;width:59px;text-align:right;font-size:12px">0.0</div><div class="t" style="left:1145px;top:150px;font-size:12px;">0.0</div><div class="t" style="left:0px;top:219px;width:59px;text-align:right;font-size:12px">-10.0</div><div class="t" style="left:1145px;top:219px;font-size:12px;">-10.0</div><div class="t" style="left:0px;top:289px;width:59px;text-align:right;font-size:12px">-20.0</div><div class="t" style="left:1145px;top:289px;font-size:12px;">-20.0</div><div class="t" style="left:0px;top:359px;width:59px;text-align:right;font-size:12px">-30.0</div><div class="t" style="left:1145px;top:359px;font-size:12px;">-30.0</div><div class="t" style="left:0px;top:429px;width:59px;text-align:right;font-size:12px">-40.0</div><div class="t" style="left:1145px;top:429px;font-size:12px;">-40.0</div><div class="t" style="left:0px;top:499px;width:59px;text-align:right;font-size:12px">-50.0</div><div class="t" style="left:1145px;top:499px;font-size:12px;">-50.0</div><div class="t" style="left:0px;top:569px;width:59px;text-align:right;font-size:12px">-60.0</div><div class="t" style="left:1145px;top:569px;font-size:12px;">-60.0</div><div class="t" style="left:0px;top:639px;width:59px;text-align:right;font-size:12px">-70.0</div><div class="t" style="left:1145px;top:639px;font-size:12px;">-70.0</div><div class="t" style="left:0px;top:709px;width:59px;text-align:right;font-size:12px">-80.0</div><div class="t" style="left:1145px;top:709px;font-size:12px;">-80.0</div><div class="t" style="left:0px;top:779px;width:59px;text-align:right;font-size:12px">-90.0</div><div class="t" style="left:1145px;top:779px;font-size:12px;">-90.0</div><div class="t" style="left:0px;top:849px;width:59px;text-align:right;font-size:12px">-100.0</div><div class="t" style="left:1145px;top:849px;font-size:12px;">-100.0</div><div class="t" style="left:0px;top:919px;width:59px;text-align:right;font-size:12px">-110.0</div><div class="t" style="left:1145px;top:919px;font-size:12px;">-110.0</div><div class="t" style="left:63px;top:945px;width:61px;text-align:center;font-size:12px">30</div><div class="t" style="left:110px;top:945px;width:61px;text-align:center;font-size:12px">40</div><div class="t" style="left:176px;top:945px;width:61px;text-align:center;font-size:12px">60</div><div class="t" style="left:223px;top:945px;width:61px;text-align:center;font-size:12px">80</div><div class="t" style="left:260px;top:945px;width:61px;text-align:center;font-size:12px">100</div><div class="t" style="left:373px;top:945px;width:61px;text-align:center;font-size:12px">200</div><div class="t" style="left:439px;top:945px;width:61px;text-align:center;font-size:12px">300</div><div class="t" style="left:486px;top:945px;width:61px;text-align:center;font-size:12px">400</div><div class="t" style="left:522px;top:945px;width:61px;text-align:center;font-size:12px">500</div><div class="t" style="left:552px;top:945px;width:61px;text-align:center;font-size:12px">600</div><div class="t" style="left:599px;top:945px;width:61px;text-align:center;font-size:12px">800</div><div class="t" style="left:636px;top:945px;width:61px;text-align:center;font-size:12px">1.0k</div><div class="t" style="left:749px;top:945px;width:61px;text-align:center;font-size:12px">2.0k</div><div class="t" style="left:815px;top:945px;width:61px;text-align:center;font-size:12px">3.0k</div><div class="t" style="left:862px;top:945px;width:61px;text-align:center;font-size:12px">4.0k</div><div class="t" style="left:898px;top:945px;width:61px;text-align:center;font-size:12px">5.0k</div><div class="t" style="left:928px;top:945px;width:61px;text-align:center;font-size:12px">6.0k</div><div class="t" style="left:975px;top:945px;width:61px;text-align:center;font-size:12px">8.0k</div><div class="t" style="left:1011px;top:945px;width:61px;text-align:center;font-size:12px">10.0k</div><div class="t" style="left:537px;top:139px;width:100px;text-align:center;font-size:12px">Left</div><div class="t" style="left:594px;top:957px;width:100px;text-align:center;font-size:12px">Frequency (Hz)</div><div class="t" style="left:19px;top:545px;width:0;height:0"><div style="position:absolute;left:-70px;top:-6px;width:140px;text-align:center;font-size:12px;letter-spacing:0.6px;transform:rotate(-90deg)">Relative Amplitude (dB)</div></div><div class="a" style="left:1118px;top:945px;width:30px;height:4px;overflow:hidden"><div class="t" style="left:2px;top:0px;font-size:12px">Ovr</div></div><div class="t u" style="left:1212px;top:142px;font-size:12px">Overlays</div><div class="t" style="left:1188px;top:173px;font-size:12px;transform:rotate(-90deg);transform-origin:0 0">Set</div><div class="t" style="left:1203px;top:173px;font-size:12px;transform:rotate(-90deg);transform-origin:0 0">On</div><div class="btn2" style="left:1186px;top:176px;width:14px;height:14px"></div><div class="t" style="left:1186px;top:177px;width:13px;text-align:center;font-size:12px">1</div><div class="sunk" style="left:1203px;top:177px;width:14px;height:14px"></div><div class="t" style="left:1219px;top:179px;font-size:12px;color:#2E8B2E">Overlay 1</div><div class="btn2" style="left:1186px;top:192px;width:14px;height:14px"></div><div class="t" style="left:1186px;top:193px;width:13px;text-align:center;font-size:12px">2</div><div class="sunk" style="left:1203px;top:193px;width:14px;height:14px"></div><div class="t" style="left:1219px;top:195px;font-size:12px;color:#3AA8A8">Overlay 2</div><div class="btn2" style="left:1186px;top:208px;width:14px;height:14px"></div><div class="t" style="left:1186px;top:209px;width:13px;text-align:center;font-size:12px">3</div><div class="sunk" style="left:1203px;top:209px;width:14px;height:14px"></div><div class="t" style="left:1219px;top:211px;font-size:12px;color:#8E2E8E">Overlay 3</div><div class="btn2" style="left:1186px;top:224px;width:14px;height:14px"></div><div class="t" style="left:1186px;top:225px;width:13px;text-align:center;font-size:12px">4</div><div class="sunk" style="left:1203px;top:225px;width:14px;height:14px"></div><div class="t" style="left:1219px;top:227px;font-size:12px;color:#EE40EE">Overlay 4</div><div class="btn2" style="left:1186px;top:240px;width:14px;height:14px"></div><div class="t" style="left:1186px;top:241px;width:13px;text-align:center;font-size:12px">5</div><div class="sunk" style="left:1203px;top:241px;width:14px;height:14px"></div><div class="t" style="left:1219px;top:243px;font-size:12px;color:#8A6A3A">Overlay 5</div><div class="btn2" style="left:1186px;top:256px;width:14px;height:14px"></div><div class="t" style="left:1186px;top:257px;width:13px;text-align:center;font-size:12px">6</div><div class="sunk" style="left:1203px;top:257px;width:14px;height:14px"></div><div class="t" style="left:1219px;top:259px;font-size:12px;color:#F0A078">Overlay 6</div><div class="btn2" style="left:1186px;top:272px;width:14px;height:14px"></div><div class="t" style="left:1186px;top:273px;width:13px;text-align:center;font-size:12px">C</div><div class="sunk" style="left:1203px;top:273px;width:14px;height:14px"></div><div class="t" style="left:1219px;top:275px;font-size:12px;color:#000">Composite</div><div class="btn2" style="left:1184px;top:290px;width:63px;height:17px"></div><div class="t" style="left:1189px;top:292px;font-size:12px;">Options...</div><div class="a" style="left:1163px;top:831px;width:119px;height:61px;background:#D4D0C8;border-top:1px solid #fff;border-left:1px solid #fff;border-right:1px solid #404040;border-bottom:1px solid #404040;box-shadow:inset -1px -1px 0 #808080"></div><div class="a" style="left:1166px;top:834px;width:112px;height:18px;background:linear-gradient(to right,#808080,#C0C0C0);"></div><div class="a" style="left:1168px;top:835px;width:16px;height:16px;background:#fff;border:1px solid #000"></div><svg class="a" style="left:1170px;top:838px" width="12" height="10" viewBox="0 0 12 10"><path d="M0.5 8.5 L3.5 3.5 L4.5 8.5 L7.5 3.5 L8.5 8.5 L11.5 3.5" fill="none" stroke="#404040" stroke-width="0.9"/></svg><div class="t" style="left:1186px;top:838px;font-size:12px;font-weight:bold;color:#D4D0C8">Peak Frequ...</div><div class="btn2" style="left:1260px;top:836px;width:16px;height:14px"></div><svg class="a" style="left:1264px;top:839px" width="8" height="7" viewBox="0 0 8 7"><path d="M0.5 0.5 L7.5 6.5 M7.5 0.5 L0.5 6.5" stroke="#000" stroke-width="1.5"/></svg><div class="t" style="left:1172px;top:856px;font-size:32px;-webkit-text-stroke:0.8px #000;transform:scaleX(0.625);transform-origin:0 0">9985.84</div><div class="t" style="left:1248px;top:856px;font-size:32px;-webkit-text-stroke:0.8px #000;transform:scaleX(0.625);transform-origin:0 0">Hz</div><div class="a" style="left:1162px;top:891px;width:119px;height:63px;background:#D4D0C8;border-top:1px solid #fff;border-left:1px solid #fff;border-right:1px solid #404040;border-bottom:1px solid #404040;box-shadow:inset -1px -1px 0 #808080"></div><div class="a" style="left:1165px;top:894px;width:112px;height:18px;background:linear-gradient(to right,#808080,#C0C0C0);"></div><div class="a" style="left:1167px;top:895px;width:16px;height:16px;background:#fff;border:1px solid #000"></div><svg class="a" style="left:1169px;top:898px" width="12" height="10" viewBox="0 0 12 10"><path d="M0.5 8.5 L3.5 3.5 L4.5 8.5 L7.5 3.5 L8.5 8.5 L11.5 3.5" fill="none" stroke="#404040" stroke-width="0.9"/></svg><div class="t" style="left:1185px;top:898px;font-size:12px;font-weight:bold;color:#D4D0C8">Peak Ampli...</div><div class="btn2" style="left:1259px;top:896px;width:16px;height:14px"></div><svg class="a" style="left:1263px;top:899px" width="8" height="7" viewBox="0 0 8 7"><path d="M0.5 0.5 L7.5 6.5 M7.5 0.5 L0.5 6.5" stroke="#000" stroke-width="1.5"/></svg><div class="t" style="left:1174px;top:916px;font-size:32px;-webkit-text-stroke:0.8px #000;transform:scaleX(0.66);transform-origin:0 0">-49.06</div><div class="t" style="left:1241px;top:916px;font-size:32px;-webkit-text-stroke:0.8px #000;transform:scaleX(0.63);transform-origin:0 0">dB</div><div class="btn2" style="left:1125px;top:958px;width:10px;height:10px"></div><div class="a" style="left:1128px;top:963px;width:4px;height:1px;background:#000;"></div><div class="btn2" style="left:1271px;top:958px;width:10px;height:10px"></div><div class="a" style="left:1274px;top:963px;width:4px;height:1px;background:#000;"></div><div class="a" style="left:5px;top:970px;width:1278px;height:1px;background:#000;"></div><div class="a" style="left:5px;top:971px;width:1278px;height:1px;background:#fff;"></div><div class="a" style="left:8px;top:974px;width:119px;height:18px;border-top:1px solid #808080;border-left:1px solid #808080;border-right:1px solid #F0EEEA;border-bottom:1px solid #F0EEEA"></div><div class="t" style="left:12px;top:977px;font-size:12px;">Running...</div><div class="a" style="left:128px;top:974px;width:102px;height:18px;border-top:1px solid #808080;border-left:1px solid #808080;border-right:1px solid #F0EEEA;border-bottom:1px solid #F0EEEA"></div><div class="t" style="left:132px;top:977px;font-size:12px;">Real Time</div><div class="a" style="left:231px;top:974px;width:72px;height:18px;border-top:1px solid #808080;border-left:1px solid #808080;border-right:1px solid #F0EEEA;border-bottom:1px solid #F0EEEA"></div><div class="t" style="left:235px;top:977px;font-size:12px;">96000 Hz</div><div class="a" style="left:304px;top:974px;width:52px;height:18px;border-top:1px solid #808080;border-left:1px solid #808080;border-right:1px solid #F0EEEA;border-bottom:1px solid #F0EEEA"></div><div class="t" style="left:308px;top:977px;font-size:12px;">24 Bit</div><div class="a" style="left:357px;top:974px;width:62px;height:18px;border-top:1px solid #808080;border-left:1px solid #808080;border-right:1px solid #F0EEEA;border-bottom:1px solid #F0EEEA"></div><div class="t" style="left:361px;top:977px;font-size:12px;">Mono</div><div class="a" style="left:420px;top:974px;width:102px;height:18px;border-top:1px solid #808080;border-left:1px solid #808080;border-right:1px solid #F0EEEA;border-bottom:1px solid #F0EEEA"></div><div class="t" style="left:424px;top:977px;font-size:12px;">FFT 65536 pts</div><div class="a" style="left:523px;top:974px;width:74px;height:18px;border-top:1px solid #808080;border-left:1px solid #808080;border-right:1px solid #F0EEEA;border-bottom:1px solid #F0EEEA"></div><div class="t" style="left:527px;top:977px;font-size:12px;">Hanning</div><div class="a" style="left:598px;top:974px;width:684px;height:18px;border-top:1px solid #808080;border-left:1px solid #808080;border-right:1px solid #F0EEEA;border-bottom:1px solid #F0EEEA"></div><div class="a" style="left:600px;top:976px;width:518px;height:14px;background:linear-gradient(to right,#22E422,#5CD02C 35%,#90C42A 65%,#BAB024)"></div><div class="a" style="left:600px;top:976px;width:518px;height:14px;background:repeating-linear-gradient(to right,rgba(0,0,0,0) 0 3px,rgba(0,60,0,0.35) 3px 4px)"></div><div class="a" style="left:5px;top:995px;width:1278px;height:1px;background:#000;"></div><div class="a" style="left:4px;top:996px;width:1280px;height:1px;background:#F4F2EE;"></div></body></html>
